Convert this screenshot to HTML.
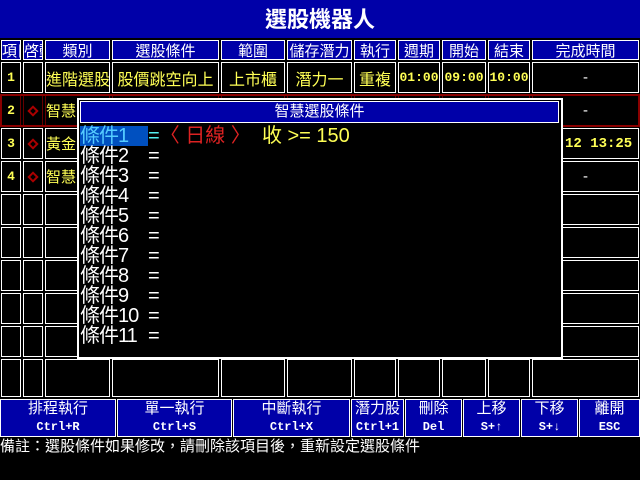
<!DOCTYPE html>
<html><head><meta charset="utf-8"><style>
*{margin:0;padding:0;box-sizing:border-box}
body{width:640px;height:480px;background:#000;position:relative;overflow:hidden;font-family:"Liberation Sans","Noto Sans CJK TC","WenQuanYi Zen Hei",sans-serif;}
.a{position:absolute}
.c{position:absolute;border:1px solid #fff;color:#ff5;font-size:15px;display:flex;align-items:center;justify-content:center;white-space:nowrap;overflow:hidden}
.h{background:#0000a8;color:#fff}
.m{font-family:"Liberation Mono",monospace;font-weight:bold;font-size:13px}
.b{position:absolute;background:#0000a8;border:1px solid #fff;color:#fff;text-align:center;font-size:15px;top:399px;height:38px;line-height:18px}
.b div:last-child{font-family:"Liberation Mono",monospace;font-weight:bold;font-size:12px}
.k{position:absolute;left:80px;width:470px;height:20px;color:#fff;font-size:20px;line-height:20px;white-space:pre}
.k .l{position:absolute;left:0;top:0;letter-spacing:-1px}
.k .e{position:absolute;left:68px;top:0}
.dia{width:8px;height:8px;border:2px solid #a00;transform:rotate(45deg)}
</style></head><body>
<div class="a" style="left:0;top:0;width:640px;height:38px;background:#0000a8;color:#fff;font-size:22px;font-weight:bold;text-align:center;line-height:40px">選股機器人</div>
<div id="g"></div>
<div class="a" style="left:0;top:94px;width:640px;height:33px;border:2px solid #8a0000"></div>
<div class="a" style="left:77px;top:98px;width:486px;height:261px;background:#000;border:2px solid #fff"></div>
<div class="a" style="left:80px;top:101px;width:479px;height:22px;background:#0000a8;border:1px solid #fff;color:#fff;font-size:15px;text-align:center;line-height:20px">智慧選股條件</div>
<div class="a" style="left:80px;top:126px;width:68px;height:20px;background:#0050c0"></div>
<div class="k" style="top:126px"><span class="l" style="color:#5cf">條件1</span><span class="e"><span style="color:#5ee">=</span><span style="color:#d22">〈 日線 〉</span>  <span style="color:#ff5">收 &gt;= 150</span></span></div>
<div class="k" style="top:146px"><span class="l">條件2</span><span class="e">=</span></div>
<div class="k" style="top:166px"><span class="l">條件3</span><span class="e">=</span></div>
<div class="k" style="top:186px"><span class="l">條件4</span><span class="e">=</span></div>
<div class="k" style="top:206px"><span class="l">條件5</span><span class="e">=</span></div>
<div class="k" style="top:226px"><span class="l">條件6</span><span class="e">=</span></div>
<div class="k" style="top:246px"><span class="l">條件7</span><span class="e">=</span></div>
<div class="k" style="top:266px"><span class="l">條件8</span><span class="e">=</span></div>
<div class="k" style="top:286px"><span class="l">條件9</span><span class="e">=</span></div>
<div class="k" style="top:306px"><span class="l">條件10</span><span class="e">=</span></div>
<div class="k" style="top:326px"><span class="l">條件11</span><span class="e">=</span></div>
<div class="b" style="left:0;width:116px"><div>排程執行</div><div>Ctrl+R</div></div>
<div class="b" style="left:117px;width:115px"><div>單一執行</div><div>Ctrl+S</div></div>
<div class="b" style="left:233px;width:117px"><div>中斷執行</div><div>Ctrl+X</div></div>
<div class="b" style="left:351px;width:53px"><div>潛力股</div><div>Ctrl+1</div></div>
<div class="b" style="left:405px;width:57px"><div>刪除</div><div>Del</div></div>
<div class="b" style="left:463px;width:57px"><div>上移</div><div>S+↑</div></div>
<div class="b" style="left:521px;width:57px"><div>下移</div><div>S+↓</div></div>
<div class="b" style="left:579px;width:61px"><div>離開</div><div>ESC</div></div>
<div class="a" style="left:0;top:438px;color:#fff;font-size:15px;line-height:18px">備註：選股條件如果修改，請刪除該項目後，重新設定選股條件</div>
<script>
var xs=[[0,22],[22,44],[44,111],[111,220],[220,286],[286,353],[353,397],[397,441],[441,487],[487,531],[531,640]];
var rows=[[39,22],[61,33],[94,33],[127,33],[160,33],[193,33],[226,33],[259,33],[292,33],[325,33],[358,40]];
var hd=["項目","啓動","類別","選股條件","範圍","儲存潛力","執行","週期","開始","結束","完成時間"];
var d={1:["1","","進階選股","股價跳空向上","上市櫃","潛力一","重複","01:00","09:00","10:00","-"],
2:["2","◇","智慧","","","","","","","","-"],3:["3","◇","黃金","","","","","","","","12 13:25"],4:["4","◇","智慧","","","","","","","","-"]};
var h="";
rows.forEach(function(r,i){xs.forEach(function(x,j){
var t=i==0?hd[j]:(d[i]?d[i][j]:"");var cls="c"+(i==0?" h":"");
var st="left:"+(x[0]+1)+"px;top:"+(r[0]+1)+"px;width:"+(x[1]-x[0]-2)+"px;height:"+(r[1]-2)+"px;";
if(i==2)st+="border-color:#600;";
if(i>0&&(j==0||(j>=7&&j<=9)||j==10&&i==3))cls+=" m";
if(i==0&&j<2)st+="justify-content:flex-start;";
if(i==1&&j>=2&&j<=6)st+="font-size:16px;";
if(i>=1&&j==2)st+="justify-content:flex-start;";
if(j==10&&i==3)st+="justify-content:flex-start;padding-left:32px;font-size:14px;color:#ff5;";
else if(j==10&&i>0)st+="color:#fff;";
if(t=="◇"){h+='<div class="'+cls+'" style="'+st+'"><div class="dia"></div></div>';return;}
h+='<div class="'+cls+'" style="'+st+'">'+t+'</div>';});});
document.getElementById("g").innerHTML=h;
</script>
</body></html>
